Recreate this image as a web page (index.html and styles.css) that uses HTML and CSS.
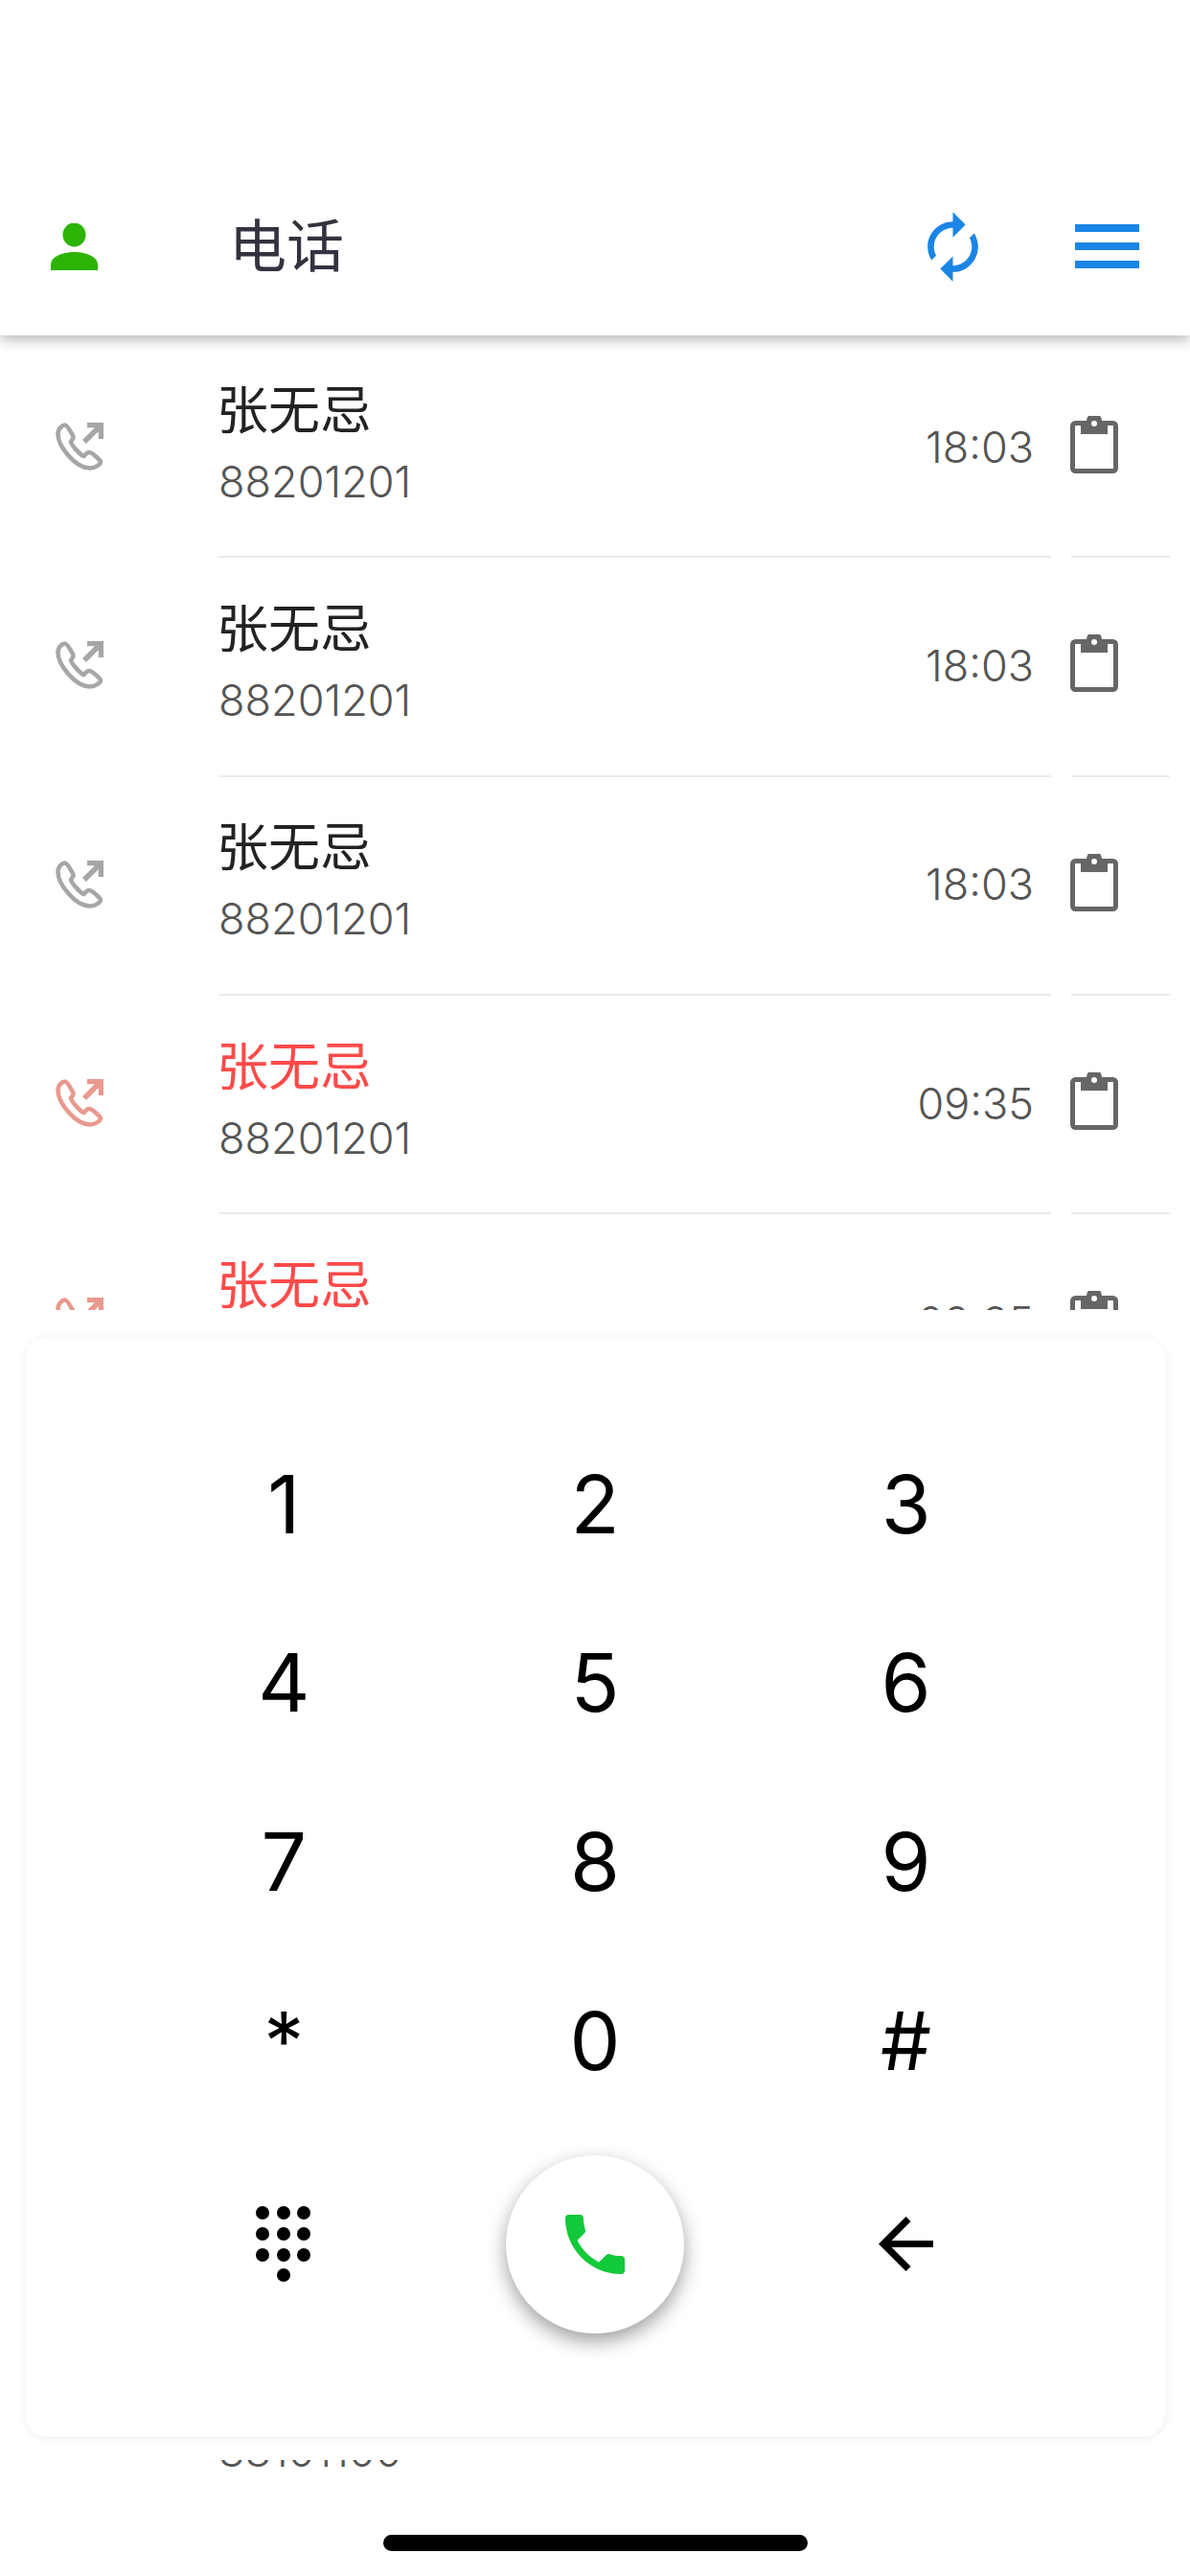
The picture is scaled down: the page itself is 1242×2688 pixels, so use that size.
FILE: index.html
```html
<!DOCTYPE html>
<html>
	<head>
		<meta charset="utf-8">
		<title>电话</title>
		<link rel="stylesheet" href="styles.css">
	</head>
	<body>
		<svg class="defs" width="0" height="0">
			<symbol id="i-out" viewBox="0 0 50 50">
				<path d="M10 2.5C7 2.5 2.5 6 2.5 12C2.5 24 20 47.5 36 47.5C42 47.5 47 43 47 41C47 39.5 40 33 37 31.5C35 30.5 33 31 31.5 33L29.5 35C26 34 17 24 16 20L18 17C19 15.5 18.5 14 17.5 12.5C15.5 9 12 2.5 10 2.5Z" fill="none" stroke="currentColor" stroke-width="4.5"/>
				<path d="M30 20L47 3M33 2.5H47.5V17" fill="none" stroke="currentColor" stroke-width="5.5"/>
			</symbol>
			<symbol id="i-clip" viewBox="0 0 50 60">
				<rect x="2.5" y="7.5" width="45" height="50" rx="3" fill="none" stroke="#666" stroke-width="5"/>
				<path d="M11 5H17A8 8 0 0 1 33 5H39V19H11Z" fill="#666"/>
				<circle cx="25" cy="8" r="3" fill="#fff"/>
			</symbol>
		</svg>

		<header class="topbar">
			<svg class="ic-user" viewBox="0 0 49 49"><ellipse cx="24.5" cy="12" rx="12" ry="12.5" fill="#2db306"/><path d="M0 49V43C0 35 12 30 24.5 30S49 35 49 43V49Z" fill="#2db306"/></svg>
			<h1 class="title">电话</h1>
			<svg class="ic-sync" viewBox="0 0 24 24"><path transform="matrix(-1 0 0 1 24 0)" d="M12 4V1L8 5l4 4V6c3.31 0 6 2.69 6 6 0 1.01-.25 1.97-.7 2.8l1.46 1.46C19.54 15.03 20 13.57 20 12c0-4.42-3.58-8-8-8zm0 14c-3.31 0-6-2.69-6-6 0-1.01.25-1.97.7-2.8L5.24 7.74C4.46 8.97 4 10.43 4 12c0 4.42 3.58 8 8 8v3l4-4-4-4v3z" fill="#1a85e6"/></svg>
			<div class="burger"><span></span><span></span><span></span></div>
		</header>

		<ul class="calls">
			<li class="call">
				<div class="call-ic"><svg><use href="#i-out"/></svg></div>
				<div class="call-main"><div><div class="name">张无忌</div><div class="num">88201201</div></div><span class="time">18:03</span></div>
				<div class="call-side"><svg><use href="#i-clip"/></svg></div>
			</li>
			<li class="call">
				<div class="call-ic"><svg><use href="#i-out"/></svg></div>
				<div class="call-main"><div><div class="name">张无忌</div><div class="num">88201201</div></div><span class="time">18:03</span></div>
				<div class="call-side"><svg><use href="#i-clip"/></svg></div>
			</li>
			<li class="call">
				<div class="call-ic"><svg><use href="#i-out"/></svg></div>
				<div class="call-main"><div><div class="name">张无忌</div><div class="num">88201201</div></div><span class="time">18:03</span></div>
				<div class="call-side"><svg><use href="#i-clip"/></svg></div>
			</li>
			<li class="call missed">
				<div class="call-ic"><svg><use href="#i-out"/></svg></div>
				<div class="call-main"><div><div class="name">张无忌</div><div class="num">88201201</div></div><span class="time">09:35</span></div>
				<div class="call-side"><svg><use href="#i-clip"/></svg></div>
			</li>
			<li class="call missed">
				<div class="call-ic"><svg><use href="#i-out"/></svg></div>
				<div class="call-main"><div><div class="name">张无忌</div><div class="num">88201201</div></div><span class="time">09:35</span></div>
				<div class="call-side"><svg><use href="#i-clip"/></svg></div>
			</li>
			<li class="call">
				<div class="call-ic"><svg><use href="#i-out"/></svg></div>
				<div class="call-main"><div><div class="name">张无忌</div><div class="num">88201201</div></div><span class="time">09:35</span></div>
				<div class="call-side"><svg><use href="#i-clip"/></svg></div>
			</li>
			<li class="call">
				<div class="call-ic"><svg><use href="#i-out"/></svg></div>
				<div class="call-main"><div><div class="name">张无忌</div><div class="num">88201201</div></div><span class="time">09:35</span></div>
				<div class="call-side"><svg><use href="#i-clip"/></svg></div>
			</li>
			<li class="call">
				<div class="call-ic"><svg><use href="#i-out"/></svg></div>
				<div class="call-main"><div><div class="name">张无忌</div><div class="num">88201201</div></div><span class="time">09:35</span></div>
				<div class="call-side"><svg><use href="#i-clip"/></svg></div>
			</li>
			<li class="call">
				<div class="call-ic"><svg><use href="#i-out"/></svg></div>
				<div class="call-main"><div><div class="name">张无忌</div><div class="num">88201201</div></div><span class="time">09:35</span></div>
				<div class="call-side"><svg><use href="#i-clip"/></svg></div>
			</li>
			<li class="call">
				<div class="call-ic"><svg><use href="#i-out"/></svg></div>
				<div class="call-main"><div><div class="name">张无忌</div><div class="num">88101100</div></div><span class="time">09:35</span></div>
				<div class="call-side"><svg><use href="#i-clip"/></svg></div>
			</li>
		</ul>

		<footer class="home"><span class="home-bar"></span></footer>

		<!-- 拨号盘盖在列表上面 -->
		<section class="dialer">
			<div class="pad">
				<div class="keys">
					<button class="key">1</button>
					<button class="key">2</button>
					<button class="key">3</button>
					<button class="key">4</button>
					<button class="key">5</button>
					<button class="key">6</button>
					<button class="key">7</button>
					<button class="key">8</button>
					<button class="key">9</button>
					<button class="key">*</button>
					<button class="key">0</button>
					<button class="key">#</button>
				</div>
				<div class="actions">
					<svg class="ic-dots" viewBox="0 0 58 80">
						<circle cx="7" cy="7" r="7"/><circle cx="29" cy="7" r="7"/><circle cx="50" cy="7" r="7"/>
						<circle cx="7" cy="29" r="7"/><circle cx="29" cy="29" r="7"/><circle cx="50" cy="29" r="7"/>
						<circle cx="7" cy="51" r="7"/><circle cx="29" cy="51" r="7"/><circle cx="50" cy="51" r="7"/>
						<circle cx="29" cy="72" r="7"/>
					</svg>
					<button class="dial"><svg viewBox="3 3 18 18"><path d="M6.62 10.79c1.44 2.83 3.76 5.14 6.59 6.59l2.2-2.2c.27-.27.67-.36 1.02-.24 1.12.37 2.33.57 3.57.57.55 0 1 .45 1 1V20c0 .55-.45 1-1 1-9.39 0-17-7.61-17-17 0-.55.45-1 1-1h3.5c.55 0 1 .45 1 1 0 1.25.2 2.45.57 3.57.11.35.03.74-.25 1.02l-2.2 2.2z" fill="#12c93a"/></svg></button>
					<svg class="ic-back" viewBox="4 4 16 16"><path d="M20 11H7.83l5.59-5.59L12 4l-8 8 8 8 1.41-1.41L7.83 13H20v-2z"/></svg>
				</div>
			</div>
		</section>
	</body>
</html>
```

FILE: styles.css
```css
*{margin: 0;padding: 0;box-sizing: border-box;}
ul,li{list-style: none;}
html,body{height: 2688px;overflow: hidden;}
body{
	position: relative;
	display: flex;
	flex-direction: column;
	background: #fff;
	font-family: "Inter", "Liberation Sans", "Noto Sans CJK SC", sans-serif;
}
.defs{position: absolute;}

/* 顶部 */
.topbar{
	flex: none;
	position: relative;
	z-index: 2;
	height: 350px;
	padding: 164px 53px 0;
	display: flex;
	align-items: center;
	background: #fff;
	box-shadow: 0 4px 14px rgba(0,0,0,0.3);
}
.ic-user{width: 49px;height: 49px;}
.title{
	flex: 1;
	margin-left: 137px;
	padding-bottom: 10px;
	font-family: "Noto Sans CJK SC", sans-serif;
	font-size: 60px;
	font-weight: 400;
	color: #333340;
}
.ic-sync{width: 79px;height: 79px;margin-right: 88px;}
.burger{
	width: 67px;
	display: flex;
	flex-direction: column;
	gap: 11px;
}
.burger span{height: 8px;background: #1a85e6;}

/* 通话列表 */
.calls{
	flex: 1;
	min-height: 0;
	overflow: hidden;
	padding-top: 4px;
}
.call{
	height: 228.33px;
	padding-right: 21px;
	display: flex;
}
.call-ic{
	flex: none;
	width: 228px;
	padding: 0 0 4px 58px;
	display: flex;
	align-items: center;
	color: #a6a6a6;
}
.call-ic svg{width: 50px;height: 50px;filter: blur(0.5px);}
.call-main{
	flex: 1;
	padding: 0 18px 5px 0;
	display: flex;
	align-items: center;
	justify-content: space-between;
	border-bottom: 2px solid #ececec;
}
.call-side{
	flex: none;
	width: 103px;
	margin-left: 21px;
	padding-bottom: 6px;
	display: flex;
	align-items: center;
	border-bottom: 2px solid #ececec;
}
.call-side svg{width: 50px;height: 60px;margin-left: -1px;}
.name{
	margin-left: -2px;
	font-family: "Noto Sans CJK SC", sans-serif;
	font-size: 54px;
	line-height: 75px;
	color: #222;
}
.num,.time{
	font-size: 45px;
	font-weight: 300;
	color: #555;
}
.num{line-height: 81px;}
.time{padding-top: 3px;line-height: 75px;}
.missed .name{color: #ff4a4a;}
.missed .call-ic{color: #e9998e;}

/* 底部 */
.home{
	flex: none;
	height: 112px;
	padding-top: 69px;
	display: flex;
	justify-content: center;
	background: #fff;
}
.home-bar{
	width: 443px;
	height: 17px;
	border-radius: 9px;
	background: #000;
}

/* 拨号盘 */
.dialer{
	position: absolute;
	z-index: 1;
	left: 0;
	right: 0;
	top: 1367px;
	height: 1200px;
	padding: 28px 26px 24px;
	background: #fff;
}
.pad{
	height: 100%;
	padding: 81px 108px 0;
	border-radius: 24px;
	background: #fff;
	box-shadow: 0 1px 10px rgba(0,0,0,0.07);
}
.keys{
	display: grid;
	grid-template-columns: repeat(3, 1fr);
	grid-auto-rows: 186.67px;
}
.key{
	border: 0;
	background: none;
	font-family: inherit;
	font-size: 84px;
	color: #000;
}
.actions{
	margin-top: 26px;
	display: grid;
	grid-template-columns: repeat(3, 1fr);
	justify-items: center;
	align-items: center;
}
.ic-dots{width: 58px;height: 80px;}
.ic-back{width: 57px;height: 57px;}
.dial{
	width: 186px;
	height: 186px;
	display: flex;
	align-items: center;
	justify-content: center;
	border: 0;
	border-radius: 50%;
	background: #fff;
	box-shadow: 0 8px 20px rgba(0,0,0,0.38);
}
.dial svg{width: 62px;height: 62px;}
```
